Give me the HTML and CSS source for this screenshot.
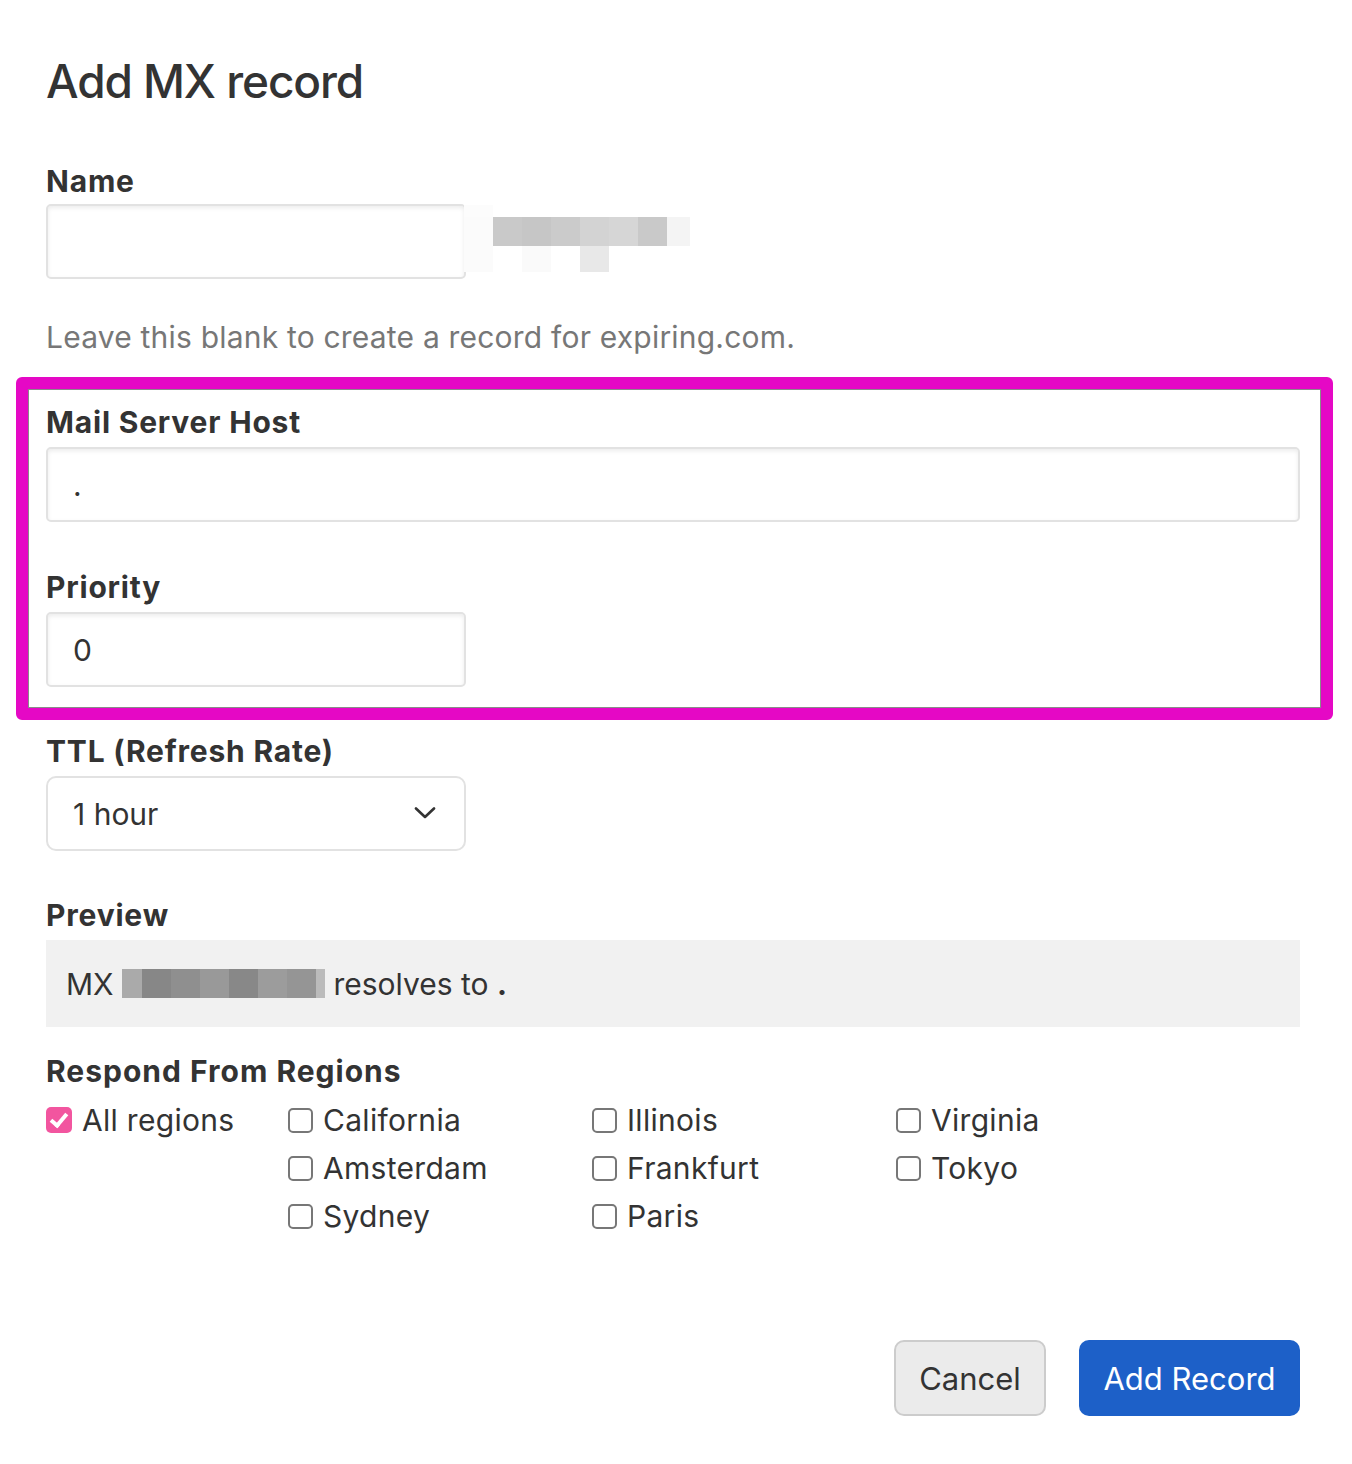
FILE: index.html
```html
<!DOCTYPE html>
<html lang="en">
<head>
  <meta charset="UTF-8">
  <meta name="viewport" content="width=device-width, initial-scale=1.0">
  <title>Add MX record</title>
  <link rel="stylesheet" href="styles.css">
</head>
<body>
  <main class="page">
    <h1 class="title">Add MX record</h1>

    <div class="field">
      <label class="label" for="recordName">Name</label>
      <div class="name-row">
        <input type="text" id="recordName" class="text-input short">
        <span class="redact redact-domain"></span>
      </div>
      <p class="hint">Leave this blank to create a record for expiring.com.</p>
    </div>

    <div class="highlight">
      <div class="field">
        <label class="label" for="mailHost">Mail Server Host</label>
        <input type="text" id="mailHost" class="text-input" value=".">
      </div>
      <div class="field field-gap">
        <label class="label" for="priority">Priority</label>
        <input type="text" id="priority" class="text-input short" value="0">
      </div>
    </div>

    <div class="field ttl-field">
      <label class="label" for="ttl">TTL (Refresh Rate)</label>
      <div class="select-wrap">
        <select id="ttl" class="select">
          <option>1 hour</option>
        </select>
        <svg class="chevron" width="22" height="12" viewBox="0 0 22 12">
          <path d="M2 1.5 L11 10 L20 1.5" fill="none" stroke="#333" stroke-width="2.6" stroke-linecap="round" stroke-linejoin="round"/>
        </svg>
      </div>
    </div>

    <div class="field preview-field">
      <div class="label">Preview</div>
      <div class="preview">MX <span class="redact redact-name"></span> resolves to <b class="dot">.</b></div>
    </div>

    <div class="field regions-field">
      <div class="label">Respond From Regions</div>
      <div class="regions">
        <label class="check all-regions"><input type="checkbox" checked> All regions</label>
        <div class="region-grid">
          <label class="check"><input type="checkbox"> California</label>
          <label class="check"><input type="checkbox"> Illinois</label>
          <label class="check"><input type="checkbox"> Virginia</label>
          <label class="check"><input type="checkbox"> Amsterdam</label>
          <label class="check"><input type="checkbox"> Frankfurt</label>
          <label class="check"><input type="checkbox"> Tokyo</label>
          <label class="check"><input type="checkbox"> Sydney</label>
          <label class="check"><input type="checkbox"> Paris</label>
        </div>
      </div>
    </div>

    <div class="actions">
      <button class="button cancel">Cancel</button>
      <button class="button primary">Add Record</button>
    </div>
  </main>
</body>
</html>
```

FILE: styles.css
```css
body {
  margin: 0;
  padding: 0;
  background-color: #ffffff;
  color: #333333;
  font-family: 'Inter', 'Noto Sans', sans-serif;
}
.page {
  width: 1254px;
  padding: 53px 0 48px 46px;
}
.title {
  margin: 0;
  font-size: 46px;
  line-height: 56px;
  font-weight: 500;
  letter-spacing: -1.1px;
}
.field {
  margin-top: 55px;
}
.label {
  display: block;
  margin-bottom: 6px;
  font-size: 30px;
  line-height: 34px;
  font-weight: 700;
  letter-spacing: 0.8px;
  color: #333333;
}
.name-row {
  display: flex;
  align-items: flex-start;
}
.text-input {
  display: block;
  box-sizing: border-box;
  width: 100%;
  height: 75px;
  margin: 0;
  padding: 0 25px;
  border: 2px solid #e2e2e2;
  border-radius: 5px;
  box-shadow: inset 0 2px 4px rgba(0, 0, 0, 0.08);
  background-color: #ffffff;
  color: #333333;
  font-family: 'Inter', 'Noto Sans', sans-serif;
  font-size: 30px;
}
.text-input.short {
  width: 420px;
}
.hint {
  margin: 41px 0 0;
  font-size: 30px;
  line-height: 34px;
  letter-spacing: 0.2px;
  color: #777777;
}

/* pixelated placeholders for hidden values */
.redact {
  display: inline-block;
}
.redact-domain {
  width: 226px;
  height: 67px;
  margin-top: 1px;
  margin-left: -2px;
  background:
    linear-gradient(to right, #fcfcfc 0 29px, transparent 29px) 0 0 / 100% 12px no-repeat,
    linear-gradient(to right, #fbfbfb 0 29px, #c9c9c9 29px 58px, #c6c6c6 58px 87px, #cbcbcb 87px 116px,
      #d3d3d3 116px 145px, #d6d6d6 145px 174px, #c9c9c9 174px 203px, #f4f4f4 203px 226px) 0 12px / 100% 29px no-repeat,
    linear-gradient(to right, #fbfbfb 0 29px, transparent 29px 58px, #fafafa 58px 87px, transparent 87px 116px,
      #e8e8e8 116px 145px, transparent 145px) 0 41px / 100% 26px no-repeat;
}
.redact-name {
  width: 203px;
  height: 29px;
  vertical-align: -4px;
  background: linear-gradient(to right, #aaaaaa 0 20px, #878787 20px 49px, #8f8f8f 49px 78px, #999999 78px 107px,
    #888888 107px 136px, #9c9c9c 136px 165px, #959595 165px 194px, #bbbbbb 194px 203px);
}

/* annotation frame around the mail fields */
.highlight {
  margin: 23px -33px 0 -30px;
  padding: 16px 21px 21px 18px;
  border: 12px solid #e508c5;
  border-radius: 6px;
  box-shadow: inset 0 0 0 1px #8a8a8a;
}
.highlight .field {
  margin-top: 0;
}
.highlight .field-gap {
  margin-top: 48px;
}
.highlight .label {
  margin-bottom: 8px;
}

.ttl-field {
  margin-top: 14px;
}
.ttl-field .label {
  margin-bottom: 8px;
}
.select-wrap {
  position: relative;
  width: 420px;
}
.select {
  display: block;
  appearance: none;
  box-sizing: border-box;
  width: 420px;
  height: 75px;
  margin: 0;
  padding: 0 25px;
  border: 2px solid #e2e2e2;
  border-radius: 10px;
  background-color: #ffffff;
  color: #333333;
  font-family: 'Inter', 'Noto Sans', sans-serif;
  font-size: 30px;
}
.chevron {
  position: absolute;
  top: 31px;
  right: 30px;
  pointer-events: none;
}

.preview-field {
  margin-top: 47px;
}
.preview-field .label {
  margin-bottom: 8px;
}
.preview {
  display: flex;
  align-items: center;
  height: 87px;
  padding-left: 20px;
  background-color: #f1f1f1;
  font-size: 30px;
  white-space: pre;
}
.preview .dot {
  font-weight: 700;
}

.regions-field {
  margin-top: 27px;
}
.regions-field .label {
  margin-bottom: 8px;
  letter-spacing: 1px;
}
.regions {
  display: flex;
  align-items: flex-start;
}
.all-regions {
  width: 242px;
}
.region-grid {
  display: grid;
  grid-template-columns: repeat(3, 304px);
}
.check {
  display: flex;
  align-items: center;
  gap: 10px;
  height: 48px;
  font-size: 30px;
  letter-spacing: 0.3px;
  color: #333333;
}
.check input {
  appearance: none;
  position: relative;
  box-sizing: border-box;
  width: 25px;
  height: 25px;
  margin: 0;
  border: 2px solid #777777;
  border-radius: 5px;
  background-color: #ffffff;
}
.check input:checked {
  width: 26px;
  height: 26px;
  border: none;
  background-color: #f2559f;
}
.check input:checked::after {
  content: "";
  position: absolute;
  left: 8px;
  top: 3px;
  width: 6px;
  height: 13px;
  border-right: 4px solid #ffffff;
  border-bottom: 4px solid #ffffff;
  transform: rotate(40deg);
}

.actions {
  display: flex;
  justify-content: flex-end;
  gap: 33px;
  margin-top: 100px;
}
.button {
  box-sizing: border-box;
  height: 76px;
  padding: 0;
  border-radius: 10px;
  font-family: 'Inter', 'Noto Sans', sans-serif;
  font-size: 31px;
  white-space: nowrap;
  cursor: pointer;
}
.cancel {
  width: 152px;
  border: 2px solid #cccccc;
  background-color: #ebebeb;
  color: #333333;
}
.primary {
  width: 221px;
  border: none;
  background-color: #1d60c8;
  color: #ffffff;
}
```
